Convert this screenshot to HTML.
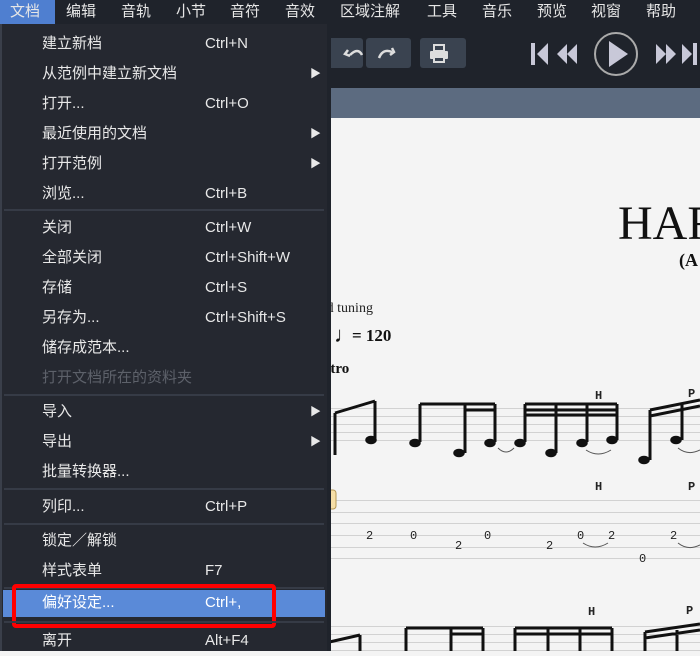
<!DOCTYPE html>
<html><head><meta charset="utf-8"><style>
*{margin:0;padding:0;box-sizing:border-box}
body{width:700px;height:651px;overflow:hidden;background:#f4f4f4;position:relative;font-family:"Liberation Sans","Noto Sans CJK SC",sans-serif}
.a{position:absolute}
#bar{left:0;top:0;width:700px;height:24px;background:#1f232b}
.m{position:absolute;top:0;height:24px;line-height:24px;color:#e6e6e6;font-size:15px}
#tb{left:327px;top:24px;width:373px;height:64px;background:#1f232b}
#blue{left:327px;top:88px;width:373px;height:30px;background:#5c6b80}
#menu{left:0;top:24px;width:327px;height:627px;background:#252830;border-left:2px solid #3a3f4a}
#strip{left:327px;top:24px;width:4px;height:627px;background:#1f232b}
.it{position:absolute;left:42px;color:#e8e8e8;font-size:15px;height:30px;line-height:30px;width:280px}
.it .s{position:absolute;left:163px;top:0}
.it .ar{position:absolute;left:268px;top:0;font-size:11px}
.sep{position:absolute;left:4px;width:320px;height:2px;background:#363b46}
.btn{position:absolute;top:38px;height:30px;background:#3a4350;border-radius:3px}
.st{position:absolute;left:331px;width:369px;height:1px;background:#d2d2d2}
.tab{position:absolute;font-size:12px;color:#222;font-family:"Liberation Mono",monospace}
</style></head><body>
<div id="bar" class="a"></div>
<div class="a" style="left:0;top:0;width:55px;height:24px;background:#4f7fd0"></div>
<div class="m" style="left:10px">文档</div>
<div class="m" style="left:66px">编辑</div>
<div class="m" style="left:121px">音轨</div>
<div class="m" style="left:176px">小节</div>
<div class="m" style="left:230px">音符</div>
<div class="m" style="left:285px">音效</div>
<div class="m" style="left:340px">区域注解</div>
<div class="m" style="left:427px">工具</div>
<div class="m" style="left:482px">音乐</div>
<div class="m" style="left:537px">预览</div>
<div class="m" style="left:591px">视窗</div>
<div class="m" style="left:646px">帮助</div>

<div id="tb" class="a"></div>
<div class="btn" style="left:320px;width:43px"></div>
<div class="btn" style="left:366px;width:45px"></div>
<div class="btn" style="left:420px;width:46px"></div>
<svg class="a" style="left:320px;top:38px" width="150" height="30">
<path d="M30 17 q8 -8 12 0 M28 12 l-3 4 l5 2" stroke="#ddd" stroke-width="2.5" fill="none"/>
<path d="M59 20 q4 -10 13 -6 M72 10 l2 4 l-4 3" stroke="#ddd" stroke-width="2.5" fill="none"/>
<rect x="114" y="7" width="10" height="6" fill="none" stroke="#ddd" stroke-width="2"/>
<rect x="110" y="13" width="18" height="8" rx="1" fill="#ddd"/>
<rect x="114" y="19" width="10" height="5" fill="#3a4350" stroke="#ddd" stroke-width="2"/>
</svg>
<svg class="a" style="left:525px;top:30px" width="175" height="46">
<g fill="#c8c8d8">
<rect x="6" y="13" width="4" height="22"/><path d="M12 24 l11 -11 v22z"/>
<path d="M32 24 l10 -10 v20z M42 24 l10 -10 v20z"/>
<path d="M84 11 l19 13 l-19 13z"/>
<path d="M131 14 l10 10 l-10 10z M141 14 l10 10 l-10 10z"/>
<path d="M157 14 l10 10 l-10 10z"/><rect x="168" y="13" width="4" height="22"/>
</g>
<circle cx="91" cy="24" r="21" fill="none" stroke="#aaa" stroke-width="2"/>
</svg>
<div id="blue" class="a"></div>

<!-- score -->
<div class="a" style="left:618px;top:196px;font-family:'Liberation Serif',serif;font-size:48px;color:#111">HAR</div>
<div class="a" style="left:679px;top:250px;font-family:'Liberation Serif',serif;font-size:18px;font-weight:bold;color:#111">(A</div>
<div class="a" style="left:322px;top:301px;font-family:'Liberation Serif',serif;font-size:14px;color:#222">rd tuning</div>
<div class="a" style="left:334px;top:322px;font-family:'Liberation Serif',serif;font-size:22px;color:#111">♩</div>
<div class="a" style="left:352px;top:326px;font-family:'Liberation Serif',serif;font-size:17px;font-weight:bold;color:#111">= 120</div>
<div class="a" style="left:322px;top:361px;font-family:'Liberation Serif',serif;font-size:15px;font-weight:bold;color:#111">ntro</div>
<div class="st" style="top:408px"></div><div class="st" style="top:416px"></div><div class="st" style="top:424px"></div><div class="st" style="top:432px"></div><div class="st" style="top:440px"></div>
<div class="st" style="top:500px"></div><div class="st" style="top:512px"></div><div class="st" style="top:523px"></div><div class="st" style="top:535px"></div><div class="st" style="top:547px"></div><div class="st" style="top:558px"></div>
<div class="st" style="top:626px"></div><div class="st" style="top:634px"></div><div class="st" style="top:642px"></div><div class="st" style="top:650px"></div>
<svg class="a" style="left:320px;top:380px" width="380" height="271">
<g transform="translate(0,-20)">
<g stroke="#111" stroke-width="1.5" fill="#111">
<path d="M15 53 L55 41 M15 53 V95 M55 41 V80" stroke-width="3"/>
<ellipse cx="51" cy="80" rx="5" ry="3.5"/>
<path d="M100 44 H175 M100 44 V82 M145 44 V93 M175 44 V82 M145 50 H175" stroke-width="3"/>
<ellipse cx="95" cy="83" rx="5" ry="3.5"/><ellipse cx="139" cy="93" rx="5" ry="3.5"/><ellipse cx="170" cy="83" rx="5" ry="3.5"/>
<path d="M205 44 H297 M205 44 V82 M236 44 V93 M267 44 V82 M297 44 V80 M205 50 H297 M205 55 H297" stroke-width="3"/>
<ellipse cx="200" cy="83" rx="5" ry="3.5"/><ellipse cx="231" cy="93" rx="5" ry="3.5"/><ellipse cx="262" cy="83" rx="5" ry="3.5"/><ellipse cx="292" cy="80" rx="5" ry="3.5"/>
<path d="M330 50 L380 40 M330 50 V100 M330 56 L380 46 M362 43 V80" stroke-width="3"/>
<ellipse cx="324" cy="100" rx="5" ry="3.5"/><ellipse cx="356" cy="80" rx="5" ry="3.5"/>
</g>
<g fill="none" stroke="#555"><path d="M178 88 q8 8 16 0 M266 90 q12 8 25 0 M358 88 q10 8 22 2"/></g>
</g>
<g stroke="#111" fill="none">
<path d="M5 263 L40 255 M40 255 V271 M86 248 H163 M86 248 V271 M131 248 V271 M163 248 V271 M131 254 H163 M195 248 H292 M195 248V271 M228 248V271 M260 248V271 M292 248V271 M195 254H292 M325 252 L380 244 M325 252V271 M325 258 L380 250 M357 250V271" stroke-width="3"/>
</g>
<g fill="none" stroke="#555"><path d="M263 163 q12 8 25 0 M358 163 q10 8 22 2"/></g>
<rect x="2" y="110" width="14" height="19" rx="3" fill="#f6dfa8" stroke="#b59856"/>
</svg>
<div class="tab" style="left:595px;top:389px;font-weight:bold">H</div>
<div class="tab" style="left:688px;top:387px;font-weight:bold">P</div>
<div class="tab" style="left:595px;top:480px;font-weight:bold">H</div>
<div class="tab" style="left:688px;top:480px;font-weight:bold">P</div>
<div class="tab" style="left:588px;top:605px;font-weight:bold">H</div>
<div class="tab" style="left:686px;top:604px;font-weight:bold">P</div>
<div class="tab" style="left:366px;top:529px">2</div>
<div class="tab" style="left:410px;top:529px">0</div>
<div class="tab" style="left:455px;top:539px">2</div>
<div class="tab" style="left:484px;top:529px">0</div>
<div class="tab" style="left:546px;top:539px">2</div>
<div class="tab" style="left:577px;top:529px">0</div>
<div class="tab" style="left:608px;top:529px">2</div>
<div class="tab" style="left:639px;top:552px">0</div>
<div class="tab" style="left:670px;top:529px">2</div>

<div id="strip" class="a"></div>
<div id="menu" class="a"></div>
<div class="it" style="top:29px">建立新档<span class="s">Ctrl+N</span></div>
<div class="it" style="top:59px">从范例中建立新文档<span class="ar">▶</span></div>
<div class="it" style="top:89px">打开...<span class="s">Ctrl+O</span></div>
<div class="it" style="top:119px">最近使用的文档<span class="ar">▶</span></div>
<div class="it" style="top:149px">打开范例<span class="ar">▶</span></div>
<div class="it" style="top:179px">浏览...<span class="s">Ctrl+B</span></div>
<div class="sep" style="top:209px"></div>
<div class="it" style="top:213px">关闭<span class="s">Ctrl+W</span></div>
<div class="it" style="top:243px">全部关闭<span class="s">Ctrl+Shift+W</span></div>
<div class="it" style="top:273px">存储<span class="s">Ctrl+S</span></div>
<div class="it" style="top:303px">另存为...<span class="s">Ctrl+Shift+S</span></div>
<div class="it" style="top:333px">储存成范本...</div>
<div class="it" style="top:363px;color:#5d616a">打开文档所在的资料夹</div>
<div class="sep" style="top:394px"></div>
<div class="it" style="top:397px">导入<span class="ar">▶</span></div>
<div class="it" style="top:427px">导出<span class="ar">▶</span></div>
<div class="it" style="top:457px">批量转换器...</div>
<div class="sep" style="top:488px"></div>
<div class="it" style="top:492px">列印...<span class="s">Ctrl+P</span></div>
<div class="sep" style="top:523px"></div>
<div class="it" style="top:526px">锁定／解锁</div>
<div class="it" style="top:556px">样式表单<span class="s">F7</span></div>
<div class="sep" style="top:587px"></div>
<div class="a" style="left:3px;top:590px;width:322px;height:27px;background:#5a8ad8"></div>
<div class="it" style="top:588px;color:#fff">偏好设定...<span class="s">Ctrl+,</span></div>
<div class="a" style="left:12px;top:584px;width:264px;height:44px;border:4px solid #f00;border-radius:4px"></div>
<div class="sep" style="top:621px"></div>
<div class="it" style="top:626px">离开<span class="s">Alt+F4</span></div>
</body></html>
